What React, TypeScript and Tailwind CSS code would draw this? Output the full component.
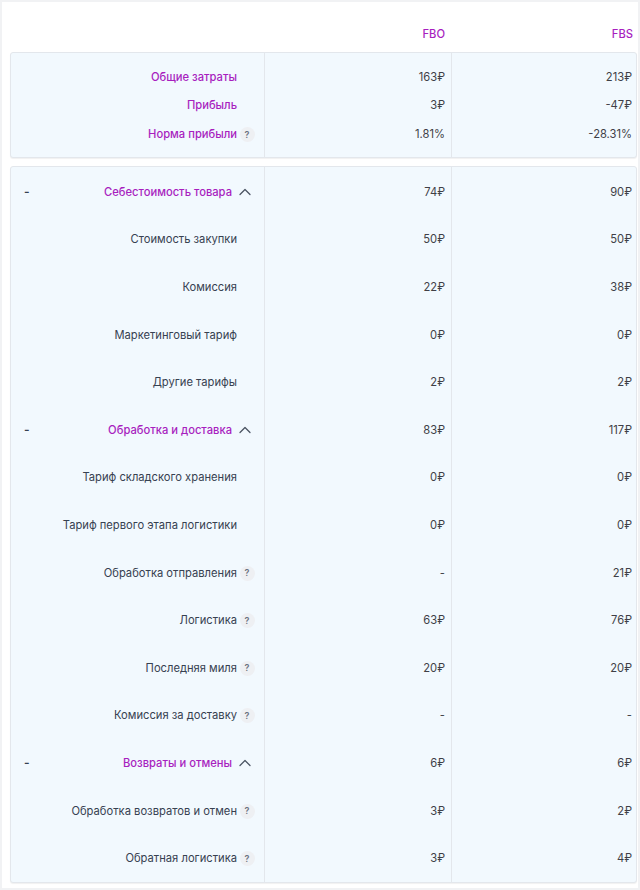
import { ChevronUp } from "lucide-react";

type Row = {
  label: string;
  fbo: string;
  fbs: string;
  group?: boolean;
  hint?: boolean;
};

const summary: Row[] = [
  { label: "Общие затраты", fbo: "163₽", fbs: "213₽" },
  { label: "Прибыль", fbo: "3₽", fbs: "-47₽" },
  { label: "Норма прибыли", fbo: "1.81%", fbs: "-28.31%", hint: true },
];

const details: Row[] = [
  { label: "Себестоимость товара", fbo: "74₽", fbs: "90₽", group: true },
  { label: "Стоимость закупки", fbo: "50₽", fbs: "50₽" },
  { label: "Комиссия", fbo: "22₽", fbs: "38₽" },
  { label: "Маркетинговый тариф", fbo: "0₽", fbs: "0₽" },
  { label: "Другие тарифы", fbo: "2₽", fbs: "2₽" },
  { label: "Обработка и доставка", fbo: "83₽", fbs: "117₽", group: true },
  { label: "Тариф складского хранения", fbo: "0₽", fbs: "0₽" },
  { label: "Тариф первого этапа логистики", fbo: "0₽", fbs: "0₽" },
  { label: "Обработка отправления", fbo: "-", fbs: "21₽", hint: true },
  { label: "Логистика", fbo: "63₽", fbs: "76₽", hint: true },
  { label: "Последняя миля", fbo: "20₽", fbs: "20₽", hint: true },
  { label: "Комиссия за доставку", fbo: "-", fbs: "-", hint: true },
  { label: "Возвраты и отмены", fbo: "6₽", fbs: "6₽", group: true },
  { label: "Обработка возвратов и отмен", fbo: "3₽", fbs: "2₽", hint: true },
  { label: "Обратная логистика", fbo: "3₽", fbs: "4₽", hint: true },
];

const cols = "grid grid-cols-[253px_187px_1fr]";

function Hint() {
  return (
    <span className="flex h-[15px] w-[15px] items-center justify-center rounded-full bg-[#eef0f3] text-[9px] font-semibold text-[#6b7280]">
      ?
    </span>
  );
}

function Label({ row, purple }: { row: Row; purple?: boolean }) {
  return (
    <div className={`relative flex h-full items-center justify-end pr-[9px] ${row.group ? "gap-[3px]" : "gap-[2px]"}`}>
      {row.group && (
        <span className="absolute left-[13px] top-1/2 -translate-y-1/2 text-[12px] font-semibold text-[#374151]">-</span>
      )}
      <span
        className={
          purple || row.group
            ? "font-medium text-[#a81fbf]"
            : "text-[#374151]"
        }
      >
        {row.label}
      </span>
      {row.group ? (
        <span className="flex w-[20px] items-center justify-center">
          <ChevronUp size={20} strokeWidth={1.5} className="text-[#4b5563]" />
        </span>
      ) : (
        <span className="flex w-[16px] items-center justify-center">{row.hint && <Hint />}</span>
      )}
    </div>
  );
}

function Block({ rows, rowH, summaryBlock }: { rows: Row[]; rowH: string; summaryBlock?: boolean }) {
  const pad = summaryBlock ? "pt-[10px] pb-[8px]" : "pt-[2px]";
  return (
    <div className={`${cols} rounded-[3px] border border-[#e3e7ec] bg-[#f2f9fe] shadow-[0_1px_1px_rgba(0,0,0,0.06)]`}>
      <div className={pad}>
        {rows.map((r) => (
          <div key={r.label} className={rowH}>
            <Label row={r} purple={summaryBlock} />
          </div>
        ))}
      </div>
      <div className={`border-l border-[#e3e7ec] ${pad}`}>
        {rows.map((r) => (
          <div key={r.label} className={`${rowH} flex items-center justify-end pr-[6px] text-[#3f3f46]`}>
            {r.fbo}
          </div>
        ))}
      </div>
      <div className={`border-l border-[#e3e7ec] ${pad}`}>
        {rows.map((r) => (
          <div key={r.label} className={`${rowH} flex items-center justify-end pr-[4px] text-[#3f3f46]`}>
            {r.fbs}
          </div>
        ))}
      </div>
    </div>
  );
}

export default function App() {
  return (
    <div className="min-h-screen bg-[#f1f2f4] p-[2px] font-['Inter',sans-serif] text-[11.2px]">
      <div className="bg-white pb-[5px] pl-[8px] pr-px">
        <div className={`${cols} h-[50px] items-end pb-[9px] font-medium text-[#a81fbf]`}>
          <div />
          <div className="pr-[5px] text-right">FBO</div>
          <div className="pr-[4px] text-right">FBS</div>
        </div>
        <Block rows={summary} rowH="h-[28.5px]" summaryBlock />
        <div className="h-[8px]" />
        <Block rows={details} rowH="h-[47.6px]" />
      </div>
    </div>
  );
}
